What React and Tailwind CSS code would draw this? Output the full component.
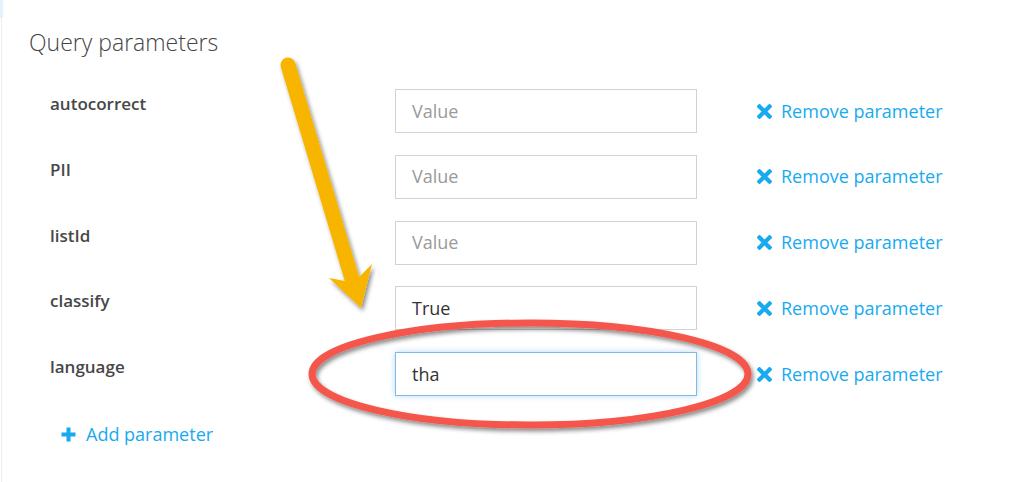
import React from "react";

const rows = [
  { name: "autocorrect", value: "", focused: false },
  { name: "PII", value: "", focused: false },
  { name: "listId", value: "", focused: false },
  { name: "classify", value: "True", focused: false },
  { name: "language", value: "tha", focused: true },
];

function XIcon() {
  return (
    <svg width="15" height="15" viewBox="0 0 15 15" className="shrink-0">
      <path d="M2.5 2.5 L12.5 12.5 M12.5 2.5 L2.5 12.5" stroke="#17aaf0" strokeWidth="4.2" strokeLinecap="square" />
    </svg>
  );
}

function PlusIcon() {
  return (
    <svg width="15" height="15" viewBox="0 0 15 15" className="shrink-0">
      <path d="M7.5 0.5 V14.5 M0.5 7.5 H14.5" stroke="#17aaf0" strokeWidth="4" />
    </svg>
  );
}

function Row({ name, value, focused }) {
  return (
    <div className="flex h-[65.75px] items-start">
      <div className="w-[366px] pl-[21px] pt-[3px] text-[17px] font-semibold leading-[24px] text-[#474747]">
        {name}
      </div>
      <div
        className={
          focused
            ? "flex h-[44px] w-[302px] items-center border border-[#7fbbe9] bg-white pl-[16px] text-[18px] text-[#333] shadow-[0_0_6px_rgba(91,170,230,0.45)]"
            : "flex h-[44px] w-[302px] items-center border border-[#d2d2d2] bg-white pl-[16px] text-[18px] text-[#333]"
        }
      >
        {value ? value : <span className="text-[#9a9a9a]">Value</span>}
      </div>
      <div className="ml-[60px] flex h-[44px] items-center gap-[9px] text-[18px] text-[#17aaf0]">
        <XIcon />
        <span>Remove parameter</span>
      </div>
    </div>
  );
}

export default function App() {
  return (
    <div
      className="relative h-[482px] w-[1024px] overflow-hidden bg-white"
      style={{ fontFamily: '"Open Sans", "Noto Sans", sans-serif' }}
    >
      <div className="absolute left-0 top-0 h-[18px] w-[3px] bg-[#e3f1fb]" />
      <div className="h-full border-l border-[#ededed] ml-[1px] pl-[27px] pt-[26px]">
        <h1 className="text-[23px] font-light leading-[32px] text-[#444]">Query parameters</h1>
        <div className="mt-[31px] flex flex-col">
          {rows.map((r) => (
            <Row key={r.name} {...r} />
          ))}
        </div>
        <div className="ml-[32px] mt-[3px] flex items-center gap-[10px] text-[18px] text-[#17aaf0]">
          <PlusIcon />
          <span>Add parameter</span>
        </div>
      </div>

      <svg className="pointer-events-none absolute left-0 top-0" width="1024" height="482" viewBox="0 0 1024 482">
        <defs>
          <filter id="sh" x="-20%" y="-20%" width="140%" height="140%">
            <feDropShadow dx="2" dy="3" stdDeviation="2" floodColor="#000" floodOpacity="0.45" />
          </filter>
        </defs>
        <path
          d="M280.8 67.1 L344.8 281 L329 278 L361 308 L372 264 L359.2 277 L295.2 62.9 A7.5 7.5 0 0 0 280.8 67.1 Z"
          fill="#f8b500"
          filter="url(#sh)"
        />
        <ellipse cx="530" cy="374" rx="218" ry="51" fill="none" stroke="#f4574b" strokeWidth="7" filter="url(#sh)" />
      </svg>
    </div>
  );
}
